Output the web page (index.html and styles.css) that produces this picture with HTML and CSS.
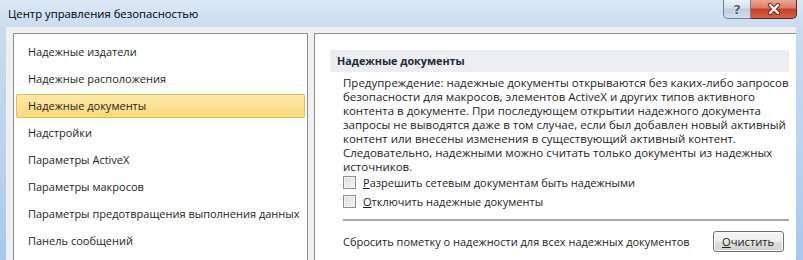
FILE: index.html
```
<!DOCTYPE html>
<html lang="ru">
<head>
    <meta charset="UTF-8">
    <title>Центр управления безопасностью</title>
    <link rel="stylesheet" href="styles.css">
</head>
<body>
    <div class="window">
        <div class="titlebar">
            <span class="title">Центр управления безопасностью</span>
            <div class="caption-buttons">
                <button class="cap-help">?</button>
                <button class="cap-close">
                    <svg width="14" height="12" viewBox="0 0 14 12">
                        <path d="M3 2 L11 10 M11 2 L3 10" stroke="#6b2418" stroke-width="4.2" stroke-linecap="round"/>
                        <path d="M3 2 L11 10 M11 2 L3 10" stroke="#ffffff" stroke-width="2.4" stroke-linecap="round"/>
                    </svg>
                </button>
            </div>
        </div>

        <div class="client">
            <ul class="nav">
                <li>Надежные издатели</li>
                <li>Надежные расположения</li>
                <li class="active">Надежные документы</li>
                <li>Надстройки</li>
                <li>Параметры ActiveX</li>
                <li>Параметры макросов</li>
                <li>Параметры предотвращения выполнения данных</li>
                <li>Панель сообщений</li>
            </ul>

            <div class="content">
                <h2 class="section-head">Надежные документы</h2>
                <p class="warning">Предупреждение: надежные документы открываются без каких-либо запросов<br>
                безопасности для макросов, элементов ActiveX и других типов активного<br>
                контента в документе. При последующем открытии надежного документа<br>
                запросы не выводятся даже в том случае, если был добавлен новый активный<br>
                контент или внесены изменения в существующий активный контент.<br>
                Следовательно, надежными можно считать только документы из надежных<br>
                источников.</p>

                <label class="check"><span class="box"></span><span><u>Р</u>азрешить сетевым документам быть надежными</span></label>
                <label class="check"><span class="box"></span><span><u>О</u>тключить надежные документы</span></label>

                <div class="sep"></div>

                <div class="reset-row">
                    <span>Сбросить пометку о надежности для всех надежных документов</span>
                    <button class="btn"><u>О</u>чистить</button>
                </div>
            </div>
        </div>
    </div>
</body>
</html>
```

FILE: styles.css
```
* {
    box-sizing: border-box;
}

body {
    margin: 0;
    font-family: "Open Sans", "Noto Sans", sans-serif;
    font-size: 11px;
    color: #1e1e1e;
}

.window {
    height: 260px;
    overflow: hidden;
    display: flex;
    flex-direction: column;
    background: linear-gradient(to bottom, #dce8f5 0, #c8dbf0 30px, #bad3ef 150px, #a9c7ec 260px);
}

.titlebar {
    height: 27px;
    flex-shrink: 0;
    display: flex;
    justify-content: space-between;
    align-items: flex-start;
    padding: 0 6px 0 8px;
}

.title {
    line-height: 28px;
    font-size: 11.3px;
    color: #000;
}

.caption-buttons {
    display: flex;
}

.caption-buttons button {
    height: 19px;
    padding: 0;
    margin: 0;
    display: flex;
    align-items: center;
    justify-content: center;
    cursor: pointer;
}

.cap-help {
    width: 28px;
    border: 1px solid #6f8094;
    border-top: none;
    border-radius: 0 0 0 5px;
    background: linear-gradient(to bottom, #eaf1f9, #d3dfed 45%, #bccbde 50%, #d2deec);
    color: #56606c;
    font-family: "DejaVu Sans", sans-serif;
    font-weight: bold;
    font-size: 13px;
    text-shadow: 0 0 2px #fff;
}

.cap-close {
    width: 46px;
    border: 1px solid #5c2a22;
    border-top: none;
    border-left: none;
    border-radius: 0 0 5px 0;
    background: linear-gradient(to bottom, #eca597, #dc7c66 45%, #c73d24 50%, #d8623f);
}

.client {
    flex: 1;
    margin: 0 7px 0 6px;
    padding: 6px 5px 0 7px;
    background: #f0f0f0;
    display: flex;
    align-items: flex-start;
    gap: 6px;
    overflow: hidden;
}

.nav {
    width: 295px;
    height: 250px;
    flex-shrink: 0;
    margin: 0;
    padding: 6px 2px;
    list-style: none;
    background: #fff;
    border: 1px solid #8b8e96;
    display: flex;
    flex-direction: column;
    gap: 3px;
}

.nav li {
    height: 24px;
    line-height: 22px;
    padding-left: 11px;
    border: 1px solid transparent;
    border-radius: 2px;
    white-space: nowrap;
}

.nav li.active {
    background: linear-gradient(to bottom, #fdeaa9, #f9d87e);
    border-color: #e2bd58;
}

.content {
    flex: 1;
    height: 250px;
    flex-shrink: 0;
    background: #fff;
    border: 1px solid #8b8e96;
    padding: 16px 13px 0 15px;
}

.section-head {
    margin: 0;
    height: 22px;
    line-height: 22px;
    padding-left: 7px;
    background: #eceef2;
    font-size: 10.8px;
    font-weight: bold;
    color: #1f2a38;
}

.warning {
    margin: 4px 0 0 13px;
    font-size: 11.5px;
    line-height: 14px;
    white-space: nowrap;
}

.check {
    display: flex;
    align-items: center;
    gap: 7px;
    height: 19px;
    margin-left: 13px;
}

.warning + .check {
    margin-top: -1px;
}

.box {
    width: 13px;
    height: 13px;
    border: 1px solid #8e8f8f;
    background: linear-gradient(to bottom right, #dcdcdc, #f6f6f6);
    box-shadow: inset 0 0 0 1px #f4f4f4;
}

.sep {
    height: 2px;
    margin: 8px 0 0 13px;
    background: #a3aab3;
}

.reset-row {
    display: flex;
    justify-content: space-between;
    align-items: center;
    margin: 10px 5px 0 13px;
}

.btn {
    width: 71px;
    height: 21px;
    padding: 0;
    font-family: inherit;
    font-size: 11.2px;
    color: #1e1e1e;
    border: 1px solid #707070;
    border-radius: 3px;
    background: linear-gradient(to bottom, #f6f6f6, #ececec 50%, #dedede 50%, #d2d2d2);
    box-shadow: inset 0 0 0 1px #fcfcfc;
}
```
